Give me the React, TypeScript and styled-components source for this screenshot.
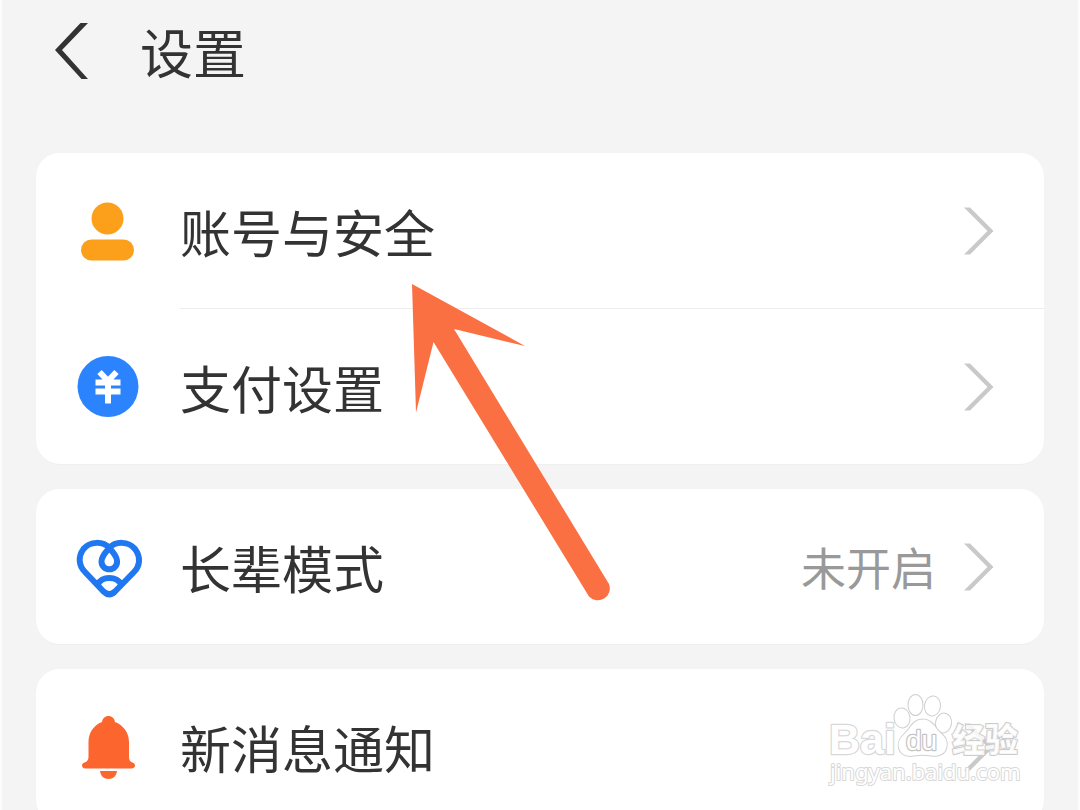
import React from "react";
import styled, { createGlobalStyle } from "styled-components";

const GlobalStyle = createGlobalStyle`
  *, *::before, *::after { box-sizing: border-box; }
  body {
    margin: 0;
    background: #f4f4f4;
    color: #333333;
    font-family: "Noto Sans CJK SC", "Noto Sans", sans-serif;
  }
`;

const Page = styled.div`
  position: relative;
  height: 100vh;
  overflow-x: hidden;
  overflow-y: auto;
  scrollbar-width: none;
  background: #f4f4f4;
  border: solid #fcfcfc;
  border-width: 0 2px;
`;

const Header = styled.header`
  display: flex;
  align-items: center;
  gap: 48px;
  height: 102px;
  padding: 0 50px;
`;

const BackButton = styled.button`
  display: flex;
  padding: 0;
  border: 0;
  background: none;
  color: #333333;
  cursor: pointer;
`;

const Title = styled.h1`
  margin: 0;
  font-size: 53px;
  line-height: 78px;
  font-weight: 400;
`;

const Groups = styled.main`
  display: flex;
  flex-direction: column;
  gap: 25px;
  padding: 51px 34px 0;
`;

const Card = styled.ul`
  margin: 0;
  padding: 0;
  list-style: none;
  background: #ffffff;
  border-radius: 24px;
  box-shadow: 0 1px 0 #efefef;
`;

const Item = styled.li`
  & + & a > div {
    border-top: 1px solid #ededed;
  }
`;

const RowLink = styled.a`
  display: flex;
  align-items: stretch;
  color: inherit;
  text-decoration: none;
`;

const IconCell = styled.span`
  display: flex;
  flex: none;
  align-items: center;
  width: 144px;
  padding-left: 36px;
`;

const RowBody = styled.div`
  box-sizing: content-box;
  display: flex;
  flex: 1;
  align-items: center;
  height: 155px;
  padding-right: 50px;
`;

const Label = styled.span`
  flex: 1;
  font-size: 51px;
  line-height: 78px;
`;

const Value = styled.span`
  margin-right: 28px;
  color: #999999;
  font-size: 45px;
  line-height: 78px;
`;

const ArrowOverlay = styled.svg`
  position: absolute;
  top: 280px;
  left: 404px;
  pointer-events: none;
`;

const Watermark = styled.svg`
  position: absolute;
  top: 690px;
  right: 46px;
  pointer-events: none;
`;

const BackIcon = () => (
  <svg width="40" height="60" viewBox="0 0 40 60" aria-hidden="true">
    <path d="M28.500 2H36L10 29L36 58H29.500L3 29Z" fill="currentColor" />
  </svg>
);

const Chevron = () => (
  <svg width="30" height="50" viewBox="0 0 30 50" aria-hidden="true">
    <path d="M0 1.500H6L29.500 25L6 48.500H0L23.500 25Z" fill="#c9c9c9" />
  </svg>
);

const UserIcon = () => (
  <svg width="72" height="72" viewBox="0 0 72 72" aria-hidden="true">
    <circle cx="35.500" cy="23.500" r="16" fill="#fc9f1a" />
    <rect x="9" y="44.500" width="53" height="21" rx="10.500" fill="#fc9f1a" />
  </svg>
);

const YuanIcon = () => (
  <svg width="72" height="72" viewBox="0 0 72 72" aria-hidden="true">
    <circle cx="36" cy="36.500" r="30.500" fill="#2b84fd" />
    <path
      d="M27.500 22L36 31L44.500 22M23.500 32.500H48.500M23.500 41.500H48.500M36 30V53.500"
      fill="none"
      stroke="#ffffff"
      strokeWidth="6"
    />
  </svg>
);

const HeartIcon = () => (
  <svg width="72" height="72" viewBox="0 0 72 72" aria-hidden="true">
    <g fill="none" stroke="#1f78f0" strokeWidth="6" strokeLinejoin="round">
      <path d="M37.300 17C31 10 18 10 11.500 18C5.500 26 7 35 13 41L31.500 60.500Q37.300 66 43 60.500L62 41C68 35 69 26 63 18C56.500 10 43.500 10 37.300 17Z" />
      <path d="M37.300 17C34 21 29.500 25 29.500 30.500A7.800 7.800 0 0 0 45.100 30.500C45.100 25 40.500 21 37.300 17Z" />
      <path d="M25.500 54C29 44.500 45.500 44.500 49.500 54" />
    </g>
  </svg>
);

const BellIcon = () => (
  <svg width="72" height="72" viewBox="0 0 72 72" aria-hidden="true">
    <path
      d="M36.500 5C33 5 30.500 7.500 30 11C22 14 16.500 21.500 16.500 31V46C16.500 49 15 50.500 12.500 51.500C8.500 53 9.500 57.500 13.500 57.500H59.500C63.500 57.500 64.500 53 60.500 51.500C58 50.500 57 49 57 46V31C57 21.500 51 14 43 11C42.500 7.500 40 5 36.500 5Z"
      fill="#fd652f"
    />
    <path d="M28 60H45C44.500 65 41 68 36.500 68S28.500 65 28 60Z" fill="#fd652f" />
  </svg>
);

type Setting = { label: string; icon: React.ReactNode; value?: string };

const groups: Setting[][] = [
  [
    { label: "账号与安全", icon: <UserIcon /> },
    { label: "支付设置", icon: <YuanIcon /> },
  ],
  [{ label: "长辈模式", icon: <HeartIcon />, value: "未开启" }],
  [{ label: "新消息通知", icon: <BellIcon /> }],
];

const SettingRow = ({ label, icon, value }: Setting) => (
  <Item>
    <RowLink href="#">
      <IconCell>{icon}</IconCell>
      <RowBody>
        <Label>{label}</Label>
        {value && <Value>{value}</Value>}
        <Chevron />
      </RowBody>
    </RowLink>
  </Item>
);

const BaiduWatermark = () => (
  <Watermark width="204" height="104" viewBox="0 0 204 104">
    <g
      fill="#ffffff"
      stroke="#d8d8d8"
      strokeWidth="1.5"
      strokeLinejoin="round"
      paintOrder="stroke"
    >
      <text x="1" y="64" fontFamily="Liberation Sans, sans-serif" fontWeight="700" fontSize="43" strokeWidth="2.5">
        Bai
      </text>
      <g stroke="#cfcfcf" strokeWidth="2">
        <ellipse cx="74" cy="28" rx="7.500" ry="9.500" transform="rotate(-8 74 28)" />
        <ellipse cx="87.500" cy="15" rx="7" ry="10" />
        <ellipse cx="104.500" cy="16" rx="7.500" ry="9.500" transform="rotate(8 104.500 16)" />
        <ellipse cx="115.500" cy="33" rx="7.500" ry="9.500" transform="rotate(10 115.500 33)" />
        <path d="M94.500 29.500C85 29.500 83 38 77.500 43C72 48 69.500 52 71 58C73 66 81 66.500 86 65.500C92 64.500 97 64.500 103 65.500C109 66.500 117 65 118.500 57C120 50 116.500 47 111.500 42C106.500 37 104 29.500 94.500 29.500Z" />
      </g>
      <text x="78" y="60" fontFamily="Liberation Sans, sans-serif" fontSize="28" stroke="#c4c4c4" strokeWidth="2.5">
        du
      </text>
      <text x="124" y="62" fontFamily="Noto Sans CJK SC, sans-serif" fontWeight="900" fontSize="33" fillOpacity="0.85" stroke="#cccccc" strokeWidth="2">
        经验
      </text>
      <text x="2" y="90" fontFamily="Noto Sans, sans-serif" fontSize="22" strokeWidth="2">
        jingyan.baidu.com
      </text>
    </g>
  </Watermark>
);

export default function App() {
  return (
    <>
      <GlobalStyle />
      <Page>
        <Header>
          <BackButton type="button" aria-label="返回">
            <BackIcon />
          </BackButton>
          <Title>设置</Title>
        </Header>
        <Groups>
          {groups.map((settings) => (
            <Card key={settings[0].label}>
              {settings.map((setting) => (
                <SettingRow key={setting.label} {...setting} />
              ))}
            </Card>
          ))}
        </Groups>
        <ArrowOverlay width="210" height="326" viewBox="0 0 210 326" aria-hidden="true">
          <path
            d="M6 4L119 66L48 49L203 304A12 12 0 0 1 183 316.500L27.500 62L10 132.500Z"
            fill="#fa7042"
          />
        </ArrowOverlay>
        <BaiduWatermark />
      </Page>
    </>
  );
}
